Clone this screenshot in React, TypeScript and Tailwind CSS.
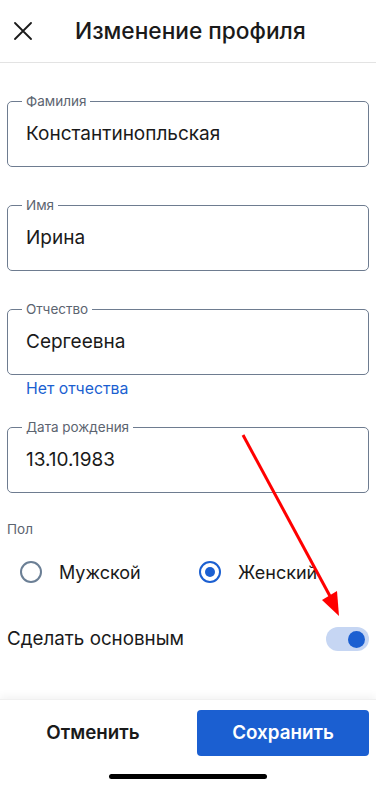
import React from "react";

function Field({ label, value }: { label: string; value: string }) {
  return (
    <fieldset className="border border-[#6e7c90] rounded-[5px] px-[18px] pb-[20px] h-[74px]">
      <legend className="-ml-1 px-1 text-[13.5px] leading-4 text-[#5c6470]">{label}</legend>
      <div className="pt-[13px] text-[19px] leading-6 text-[#1a1a1a]">{value}</div>
    </fieldset>
  );
}

function Radio({ checked, label }: { checked: boolean; label: string }) {
  return (
    <div className="flex items-center gap-[17px]">
      {checked ? (
        <span className="w-[22px] h-[22px] rounded-full border-2 border-[#1b5fd1] flex items-center justify-center">
          <span className="w-[10px] h-[10px] rounded-full bg-[#1b5fd1]" />
        </span>
      ) : (
        <span className="w-[22px] h-[22px] rounded-full border-2 border-[#6b7f95]" />
      )}
      <span className="text-[18px] text-[#1a1a1a]">{label}</span>
    </div>
  );
}

export default function App() {
  return (
    <div
      className="relative w-[376px] h-[786px] bg-white flex flex-col overflow-hidden"
      style={{ fontFamily: "Inter, Roboto, 'Noto Sans', sans-serif" }}
    >
      <header className="h-[63px] border-b border-[#e3e3e3] flex items-center">
        <svg width="18" height="18" viewBox="0 0 18 18" className="ml-[14px]">
          <path d="M1 1L17 17M17 1L1 17" stroke="#1a1a1a" strokeWidth="1.8" strokeLinecap="round" />
        </svg>
        <h1 className="ml-[43px] text-[22.7px] font-medium text-[#1a1a1a]">Изменение профиля</h1>
      </header>

      <main className="flex-1 px-[7px] pt-[30px]">
        <Field label="Фамилия" value="Константинопльская" />
        <div className="h-[30px]" />
        <Field label="Имя" value="Ирина" />
        <div className="h-[30px]" />
        <Field label="Отчество" value="Сергеевна" />
        <div className="mt-[4px] pl-[19px] text-[15.8px] leading-5 text-[#1b5fd1]">Нет отчества</div>
        <div className="h-[20px]" />
        <Field label="Дата рождения" value="13.10.1983" />

        <div className="mt-[28px] text-[13.5px] leading-4 text-[#5c6470]">Пол</div>
        <div className="mt-[13px] h-[44px] flex items-center pl-[13px]">
          <div className="w-[179px]">
            <Radio checked={false} label="Мужской" />
          </div>
          <Radio checked label="Женский" />
        </div>

        <div className="mt-[23px] h-[44px] flex items-center justify-between">
          <span className="text-[18.8px] text-[#1a1a1a]">Сделать основным</span>
          <span className="w-[43px] h-[24px] rounded-full bg-[#c6d6f3] flex items-center justify-end pr-[4px]">
            <span className="w-[17px] h-[17px] rounded-full bg-[#1b5fd1]" />
          </span>
        </div>
      </main>

      <footer className="h-[87px] shadow-[0_-3px_8px_rgba(0,0,0,0.05)] border-t border-[#f0f0f0] px-[7px] pt-[10px]">
        <div className="grid grid-cols-2 gap-[18px]">
          <button className="h-[46px] text-[18.8px] font-semibold text-[#1a1a1a]">Отменить</button>
          <button className="h-[46px] rounded-[4px] bg-[#1b5fd1] text-[18.8px] font-semibold text-white">Сохранить</button>
        </div>
        <div className="mt-[18px] mx-auto w-[158px] h-[5px] rounded-full bg-black" />
      </footer>

      <svg className="absolute inset-0 pointer-events-none" width="376" height="786" viewBox="0 0 376 786">
        <line x1="243" y1="435" x2="331" y2="598" stroke="#ff0000" strokeWidth="3" />
        <polygon points="339,616 322,600 337,591" fill="#ff0000" />
      </svg>
    </div>
  );
}
